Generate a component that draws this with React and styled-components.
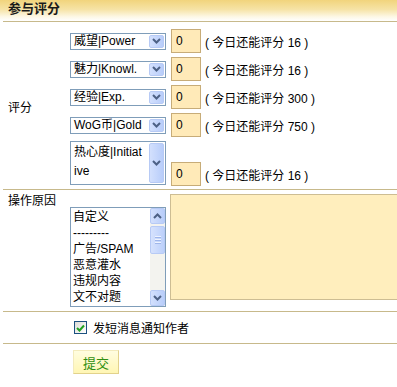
import React from 'react'
import styled, { createGlobalStyle } from 'styled-components'

const Global = createGlobalStyle`
html, body { margin:0; padding:0; background:#fff; overflow:hidden; }
body { font-family:"Liberation Sans","Noto Sans CJK SC",sans-serif; font-size:12px; color:#000; }
`

const Page = styled.div`
width:397px;
height:387px;
`

const Header = styled.div`
height:21px;
background:linear-gradient(to bottom,#f1d47c 0%,#f6e3a6 45%,#fdf8e6 80%,#fff 100%);
padding:1px 0 0 8px;
box-sizing:border-box;
font-size:13px;
font-weight:bold;
line-height:16px;
color:#1a1a1a;
`

const Section = styled.div`
display:grid;
grid-template-columns:62px 1fr;
margin-left:3px;
border-top:1px solid #c7b98b;
padding:${p => p.pad || '0'};
padding-left:5px;
`

const Label = styled.div`
align-self:${p => (p.top ? 'start' : 'center')};
line-height:14px;
`

const Stack = styled.div`
display:flex;
flex-direction:column;
gap:4px;
`

const ScoreRow = styled.div`
display:flex;
align-items:${p => (p.tall ? 'flex-end' : 'center')};
height:${p => (p.tall ? '45px' : '24px')};
`

const Entry = styled.div`
display:flex;
align-items:center;
`

const SelectBox = styled.div`
width:96px;
height:${p => p.h}px;
box-sizing:border-box;
border:1px solid #7f9db9;
background:#fff;
display:flex;
margin-bottom:${p => (p.tall ? '1px' : '0')};
`

const SelectText = styled.div`
flex:1;
padding:${p => (p.tall ? '1px 4px 0 3px' : '0 3px')};
line-height:${p => (p.tall ? '19px' : '15px')};
white-space:${p => (p.tall ? 'normal' : 'nowrap')};
word-break:break-all;
overflow:hidden;
`

const DropButton = styled.div`
width:15px;
margin:1px;
border:1px solid #b7caf5;
border-radius:2px;
box-sizing:border-box;
background:linear-gradient(to right,#d3e0fd,#b8cdfa);
display:flex;
align-items:center;
justify-content:center;
`

const ScoreInput = styled.input`
width:30px;
height:24px;
box-sizing:border-box;
margin-left:5px;
border:1px solid #c7ac78;
background:#ffeab8;
font:12px "Liberation Sans",sans-serif;
padding:0 0 0 4px;
color:#000;
outline:none;
`

const Hint = styled.span`
margin-left:4px;
white-space:nowrap;
`

const ReasonWrap = styled.div`
display:flex;
align-items:flex-start;
gap:4px;
`

const ListBox = styled.div`
margin-top:13px;
width:96px;
height:100px;
box-sizing:border-box;
border:1px solid #7f9db9;
background:#fff;
display:flex;
`

const Items = styled.div`
flex:1;
padding:1px 0 0 2px;
overflow:hidden;
`

const Item = styled.div`
height:16px;
line-height:16px;
white-space:nowrap;
`

const ScrollBar = styled.div`
width:15px;
background:#f3f3ef;
display:flex;
flex-direction:column;
`

const ScrollBtn = styled.div`
height:16px;
border:1px solid #b7caf5;
border-radius:2px;
box-sizing:border-box;
background:linear-gradient(to right,#d3e0fd,#b8cdfa);
display:flex;
align-items:center;
justify-content:center;
`

const Thumb = styled.div`
margin-top:2px;
height:28px;
border:1px solid #b7caf5;
border-radius:2px;
box-sizing:border-box;
background:linear-gradient(to right,#d6e2fd,#bcd0fb);
display:flex;
flex-direction:column;
align-items:center;
justify-content:center;
gap:1px;
`

const Grip = styled.div`
width:6px;
height:1px;
background:#eef3fe;
border-bottom:1px solid #9fb6ea;
`

const Track = styled.div`
flex:1;
`

const Reason = styled.textarea`
width:236px;
height:106px;
box-sizing:border-box;
border:1px solid #cdbd93;
background:#ffeebd;
resize:none;
outline:none;
margin:0;
`

const CheckRow = styled.div`
display:flex;
align-items:center;
height:17px;
padding-left:4px;
`

const CheckBox = styled.div`
width:13px;
height:13px;
box-sizing:border-box;
border:1px solid #1c5180;
background:linear-gradient(135deg,#dcdcd7,#fff);
display:flex;
align-items:center;
justify-content:center;
margin-right:6px;
`

const Submit = styled.button`
margin-left:3px;
width:46px;
height:24px;
box-sizing:border-box;
border:1px solid #f3ebbd;
border-right-color:#e2d28c;
border-bottom-color:#e2d28c;
background:linear-gradient(to bottom,#fffde0,#fff6b4);
color:#2f8f12;
font:13px "Noto Sans CJK SC",sans-serif;
padding:0;
`

const Chevron = ({ up }) => (
  <svg width="9" height="6" viewBox="0 0 9 6">
    <path d={up ? 'M1 5 L4.5 1.5 L8 5' : 'M1 1 L4.5 4.5 L8 1'} fill="none" stroke="#4d6185" strokeWidth="2" />
  </svg>
)

const Select = ({ text, tall }) => (
  <SelectBox h={tall ? 44 : 17} tall={tall}>
    <SelectText tall={tall}>{text}</SelectText>
    <DropButton>
      <Chevron />
    </DropButton>
  </SelectBox>
)

const scores = [
  { name: '威望|Power', left: 16 },
  { name: '魅力|Knowl.', left: 16 },
  { name: '经验|Exp.', left: 300 },
  { name: 'WoG币|Gold', left: 750 },
  { name: '热心度|Initiative', left: 16, tall: true },
]

const reasons = ['自定义', '---------', '广告/SPAM', '恶意灌水', '违规内容', '文不对题']

export default function App() {
  return (
    <Page>
      <Global />
      <Header>参与评分</Header>
      <Section pad="7px 0 3px">
        <Label>评分</Label>
        <Stack>
          {scores.map(s => (
            <ScoreRow key={s.name} tall={s.tall}>
              <Select text={s.name} tall={s.tall} />
              <Entry>
                <ScoreInput defaultValue="0" readOnly />
                <Hint>( 今日还能评分 {s.left} )</Hint>
              </Entry>
            </ScoreRow>
          ))}
        </Stack>
      </Section>
      <Section pad="4px 0 4px">
        <Label top>操作原因</Label>
        <ReasonWrap>
          <ListBox>
            <Items>
              {reasons.map(r => (
                <Item key={r}>{r}</Item>
              ))}
            </Items>
            <ScrollBar>
              <ScrollBtn>
                <Chevron up />
              </ScrollBtn>
              <Thumb>
                <Grip />
                <Grip />
                <Grip />
              </Thumb>
              <Track />
              <ScrollBtn>
                <Chevron />
              </ScrollBtn>
            </ScrollBar>
          </ListBox>
          <Reason />
        </ReasonWrap>
      </Section>
      <Section pad="7px 0 7px">
        <span />
        <CheckRow>
          <CheckBox>
            <svg width="9" height="8" viewBox="0 0 9 8">
              <path d="M1 4 L3.5 6.5 L8 1.5" fill="none" stroke="#21a121" strokeWidth="2" />
            </svg>
          </CheckBox>
          发短消息通知作者
        </CheckRow>
      </Section>
      <Section pad="6px 0 0">
        <span />
        <div>
          <Submit>提交</Submit>
        </div>
      </Section>
    </Page>
  )
}
